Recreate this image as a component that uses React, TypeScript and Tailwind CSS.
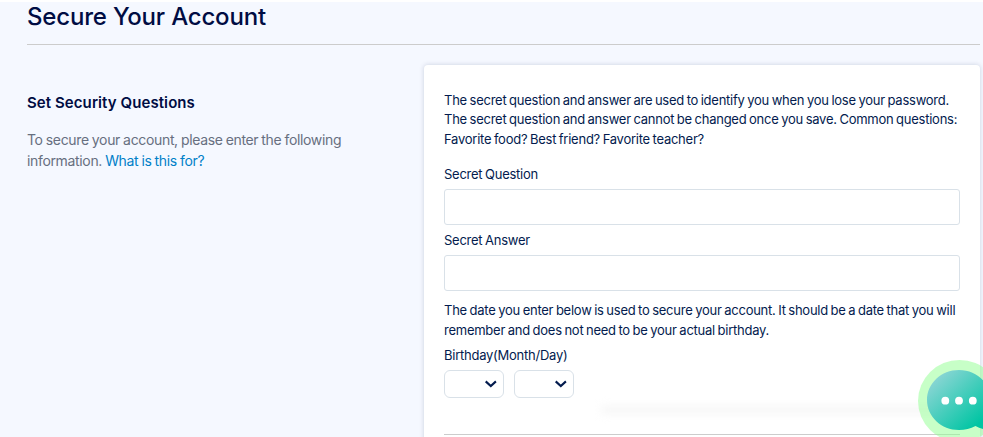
import type { ReactNode } from "react";

function TextField({ id, label, className }: { id: string; label: string; className?: string }) {
  return (
    <div className={className}>
      <label htmlFor={id} className="block h-5 leading-5">
        {label}
      </label>
      <input
        id={id}
        type="text"
        className="mt-[5px] block h-9 w-full rounded-[3px] border border-[#d9e1e8] bg-white px-3 outline-none"
      />
    </div>
  );
}

function SelectBox({ label }: { label: string }) {
  return (
    <button
      type="button"
      aria-label={label}
      className="flex h-7 w-[60px] items-center justify-end rounded-[6px] border border-[#d9e1e8] bg-white pr-[6px]"
    >
      <svg width="13" height="8" viewBox="0 0 13 8" fill="none">
        <path d="M1.700 1.400 6.800 6 11.900 1.400" stroke="#031b4e" strokeWidth="2.100" />
      </svg>
    </button>
  );
}

function Copy({ children, className }: { children: ReactNode; className?: string }) {
  return <p className={`whitespace-nowrap leading-[19.5px] ${className ?? ""}`}>{children}</p>;
}

function ChatBubble() {
  return (
    <svg
      className="absolute left-[918px] top-[357px]"
      width="65"
      height="78"
      viewBox="0 0 65 78"
      role="img"
      aria-label="Open chat"
    >
      <defs>
        <linearGradient id="bubble" x1="0.1" y1="0.1" x2="0.85" y2="0.85">
          <stop offset="0" stopColor="#8fd6d6" />
          <stop offset="1" stopColor="#00c5a3" />
        </linearGradient>
      </defs>
      <ellipse cx="41.5" cy="42" rx="41.5" ry="41" fill="#90ff90" fillOpacity="0.5" />
      <path
        d="M41 11C58.7 11 73 24.4 73 41C73 52 70 60 70 71C65 70.500 61 69 57.500 67C52.500 69.700 47 71 41 71C23.300 71 9 57.600 9 41C9 24.400 23.300 11 41 11Z"
        fill="url(#bubble)"
      />
      <circle cx="27.300" cy="41.700" r="3.900" fill="#fff" />
      <circle cx="41" cy="41.700" r="3.900" fill="#fff" />
      <circle cx="54.800" cy="41.700" r="3.900" fill="#fff" />
    </svg>
  );
}

export default function App() {
  return (
    <div className="relative h-[437px] w-[983px] overflow-hidden border-t-2 border-white bg-[#f5f8ff] font-['Inter',sans-serif] text-[#031b4e]">
      <header className="ml-[27px] mr-[3px] h-[43px] border-b border-[#cccccc]">
        <h1 className="whitespace-nowrap text-[24px] font-medium leading-[29px] tracking-[-0.19px] text-[#000c43]">
          Secure Your Account
        </h1>
      </header>

      <main className="ml-[27px] mr-[3px] mt-5 flex">
        <section className="w-[397px] shrink-0 pt-7">
          <h2 className="whitespace-nowrap text-[15px] font-semibold leading-5 tracking-[0.08px] text-[#000c43]">
            Set Security Questions
          </h2>
          <p className="mt-4 whitespace-nowrap text-[14px] leading-[21px] tracking-[-0.34px] text-[#676f80] [word-spacing:-0.5px]">
            To secure your account, please enter the following
            <br />
            information.{" "}
            <a href="#" className="text-[#0080c8]">
              What is this for?
            </a>
          </p>
        </section>

        <section className="h-[400px] w-[556px] rounded-[4px] bg-white px-5 pt-[25.5px] text-[13px] tracking-[-0.25px] shadow-[0_0_5px_rgba(3,27,78,0.18)] [word-spacing:-0.75px]">
          <Copy>
            The secret question and answer are used to identify you when you lose your password.
            <br />
            The secret question and answer cannot be changed once you save. Common questions:
            <br />
            Favorite food? Best friend? Favorite teacher?
          </Copy>
          <TextField id="question" label="Secret Question" className="mt-[15px]" />
          <TextField id="answer" label="Secret Answer" className="mt-[5px]" />
          <Copy className="mt-[10px]">
            The date you enter below is used to secure your account. It should be a date that you will
            <br />
            remember and does not need to be your actual birthday.
          </Copy>
          <div className="mt-[5px] h-5 leading-5">Birthday(Month/Day)</div>
          <div className="mt-[5px] flex gap-[10px]">
            <SelectBox label="Month" />
            <SelectBox label="Day" />
          </div>
          <div className="mt-2 ml-[157px] mr-[-10px] h-2 bg-[#f6f6f6] blur-[4px]" />
          <div className="mt-5 h-px bg-[#cccccc]" />
        </section>
      </main>

      <ChatBubble />
    </div>
  );
}
